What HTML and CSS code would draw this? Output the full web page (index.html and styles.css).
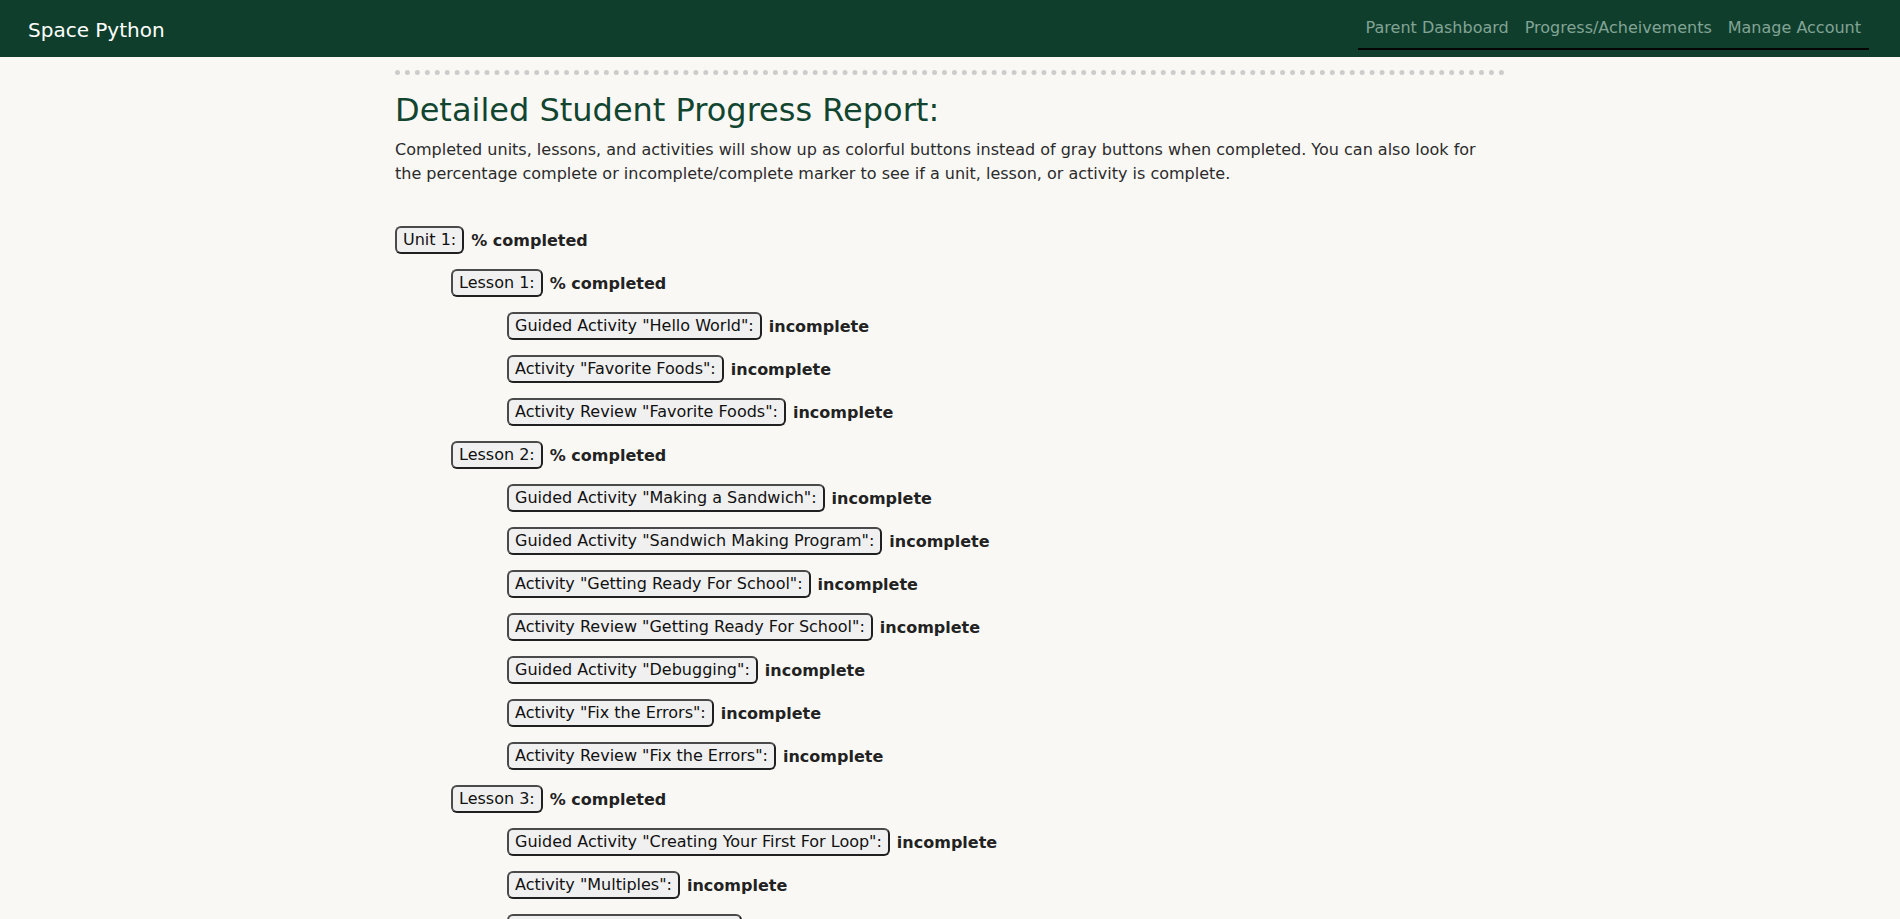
FILE: index.html
```html
<!DOCTYPE html>
<html lang="en">
<head>
<meta charset="utf-8">
<title>Space Python - Detailed Student Progress Report</title>
<link rel="stylesheet" href="styles.css">
</head>
<body>
<header class="topbar">
  <div class="brand">Space Python</div>
  <nav>
    <ul class="nav-links">
      <li><a href="#">Parent Dashboard</a></li>
      <li><a href="#">Progress/Acheivements</a></li>
      <li><a href="#">Manage Account</a></li>
    </ul>
  </nav>
</header>
<main class="content">
  <h1 class="title">Detailed Student Progress Report:</h1>
  <p class="intro">Completed units, lessons, and activities will show up as colorful buttons instead of gray buttons when completed. You can also look for the percentage complete or incomplete/complete marker to see if a unit, lesson, or activity is complete.</p>

  <div class="report">
    <div class="row unit"><button class="item">Unit 1:</button><span class="status">% completed</span></div>

    <div class="row lesson"><button class="item">Lesson 1:</button><span class="status">% completed</span></div>
    <div class="row activity"><button class="item">Guided Activity "Hello World":</button><span class="status">incomplete</span></div>
    <div class="row activity"><button class="item">Activity "Favorite Foods":</button><span class="status">incomplete</span></div>
    <div class="row activity"><button class="item">Activity Review "Favorite Foods":</button><span class="status">incomplete</span></div>

    <div class="row lesson"><button class="item">Lesson 2:</button><span class="status">% completed</span></div>
    <div class="row activity"><button class="item">Guided Activity "Making a Sandwich":</button><span class="status">incomplete</span></div>
    <div class="row activity"><button class="item">Guided Activity "Sandwich Making Program":</button><span class="status">incomplete</span></div>
    <div class="row activity"><button class="item">Activity "Getting Ready For School":</button><span class="status">incomplete</span></div>
    <div class="row activity"><button class="item">Activity Review "Getting Ready For School":</button><span class="status">incomplete</span></div>
    <div class="row activity"><button class="item">Guided Activity "Debugging":</button><span class="status">incomplete</span></div>
    <div class="row activity"><button class="item">Activity "Fix the Errors":</button><span class="status">incomplete</span></div>
    <div class="row activity"><button class="item">Activity Review "Fix the Errors":</button><span class="status">incomplete</span></div>

    <div class="row lesson"><button class="item">Lesson 3:</button><span class="status">% completed</span></div>
    <div class="row activity"><button class="item">Guided Activity "Creating Your First For Loop":</button><span class="status">incomplete</span></div>
    <div class="row activity"><button class="item">Activity "Multiples":</button><span class="status">incomplete</span></div>
    <div class="row activity"><button class="item">Activity Review "Multiples":</button><span class="status">incomplete</span></div>
  </div>
</main>
</body>
</html>
```

FILE: styles.css
```css
html, body {
  margin: 0;
  padding: 0;
}

body {
  background: #f9f8f5;
  font-family: "DejaVu Sans", Verdana, sans-serif;
  font-size: 16px;
  color: #2b2b2b;
}

.topbar {
  display: flex;
  justify-content: space-between;
  align-items: flex-start;
  height: 57px;
  padding: 0 31px 0 28px;
  background: #0f3f2c;
  box-sizing: border-box;
}

.brand {
  margin-top: 18px;
  font-size: 20px;
  line-height: 24px;
  color: #ffffff;
}

.nav-links {
  display: flex;
  list-style: none;
  margin: 18px 0 0;
  padding: 0 0 10px;
  border-bottom: 2px solid #050505;
  line-height: 20px;
}

.nav-links a {
  display: block;
  padding: 0 8px;
  color: #83a396;
  text-decoration: none;
}

.content {
  width: 1110px;
  margin: 13px auto 0;
  border-top: 5px dotted #cccccc;
}

.title {
  margin: 17px 0 0;
  font-size: 32px;
  line-height: 37px;
  font-weight: normal;
  color: #12452f;
}

.intro {
  margin: 9px 0 0;
  line-height: 24px;
  color: #2b2b2b;
}

.report {
  margin-top: 40px;
}

.row {
  display: flex;
  align-items: center;
  gap: 7px;
  margin-bottom: 15px;
}

.lesson {
  padding-left: 56px;
}

.activity {
  padding-left: 112px;
}

.item {
  height: 28px;
  padding: 0 6px;
  margin: 0;
  font-family: inherit;
  font-size: 16px;
  line-height: 24px;
  color: #111111;
  background: #f0f0f0;
  border: 2px solid #4a4a4a;
  border-right-color: #202020;
  border-bottom-color: #202020;
  border-radius: 6px;
  box-sizing: border-box;
  cursor: pointer;
}

.status {
  font-weight: bold;
  color: #222222;
}
```
